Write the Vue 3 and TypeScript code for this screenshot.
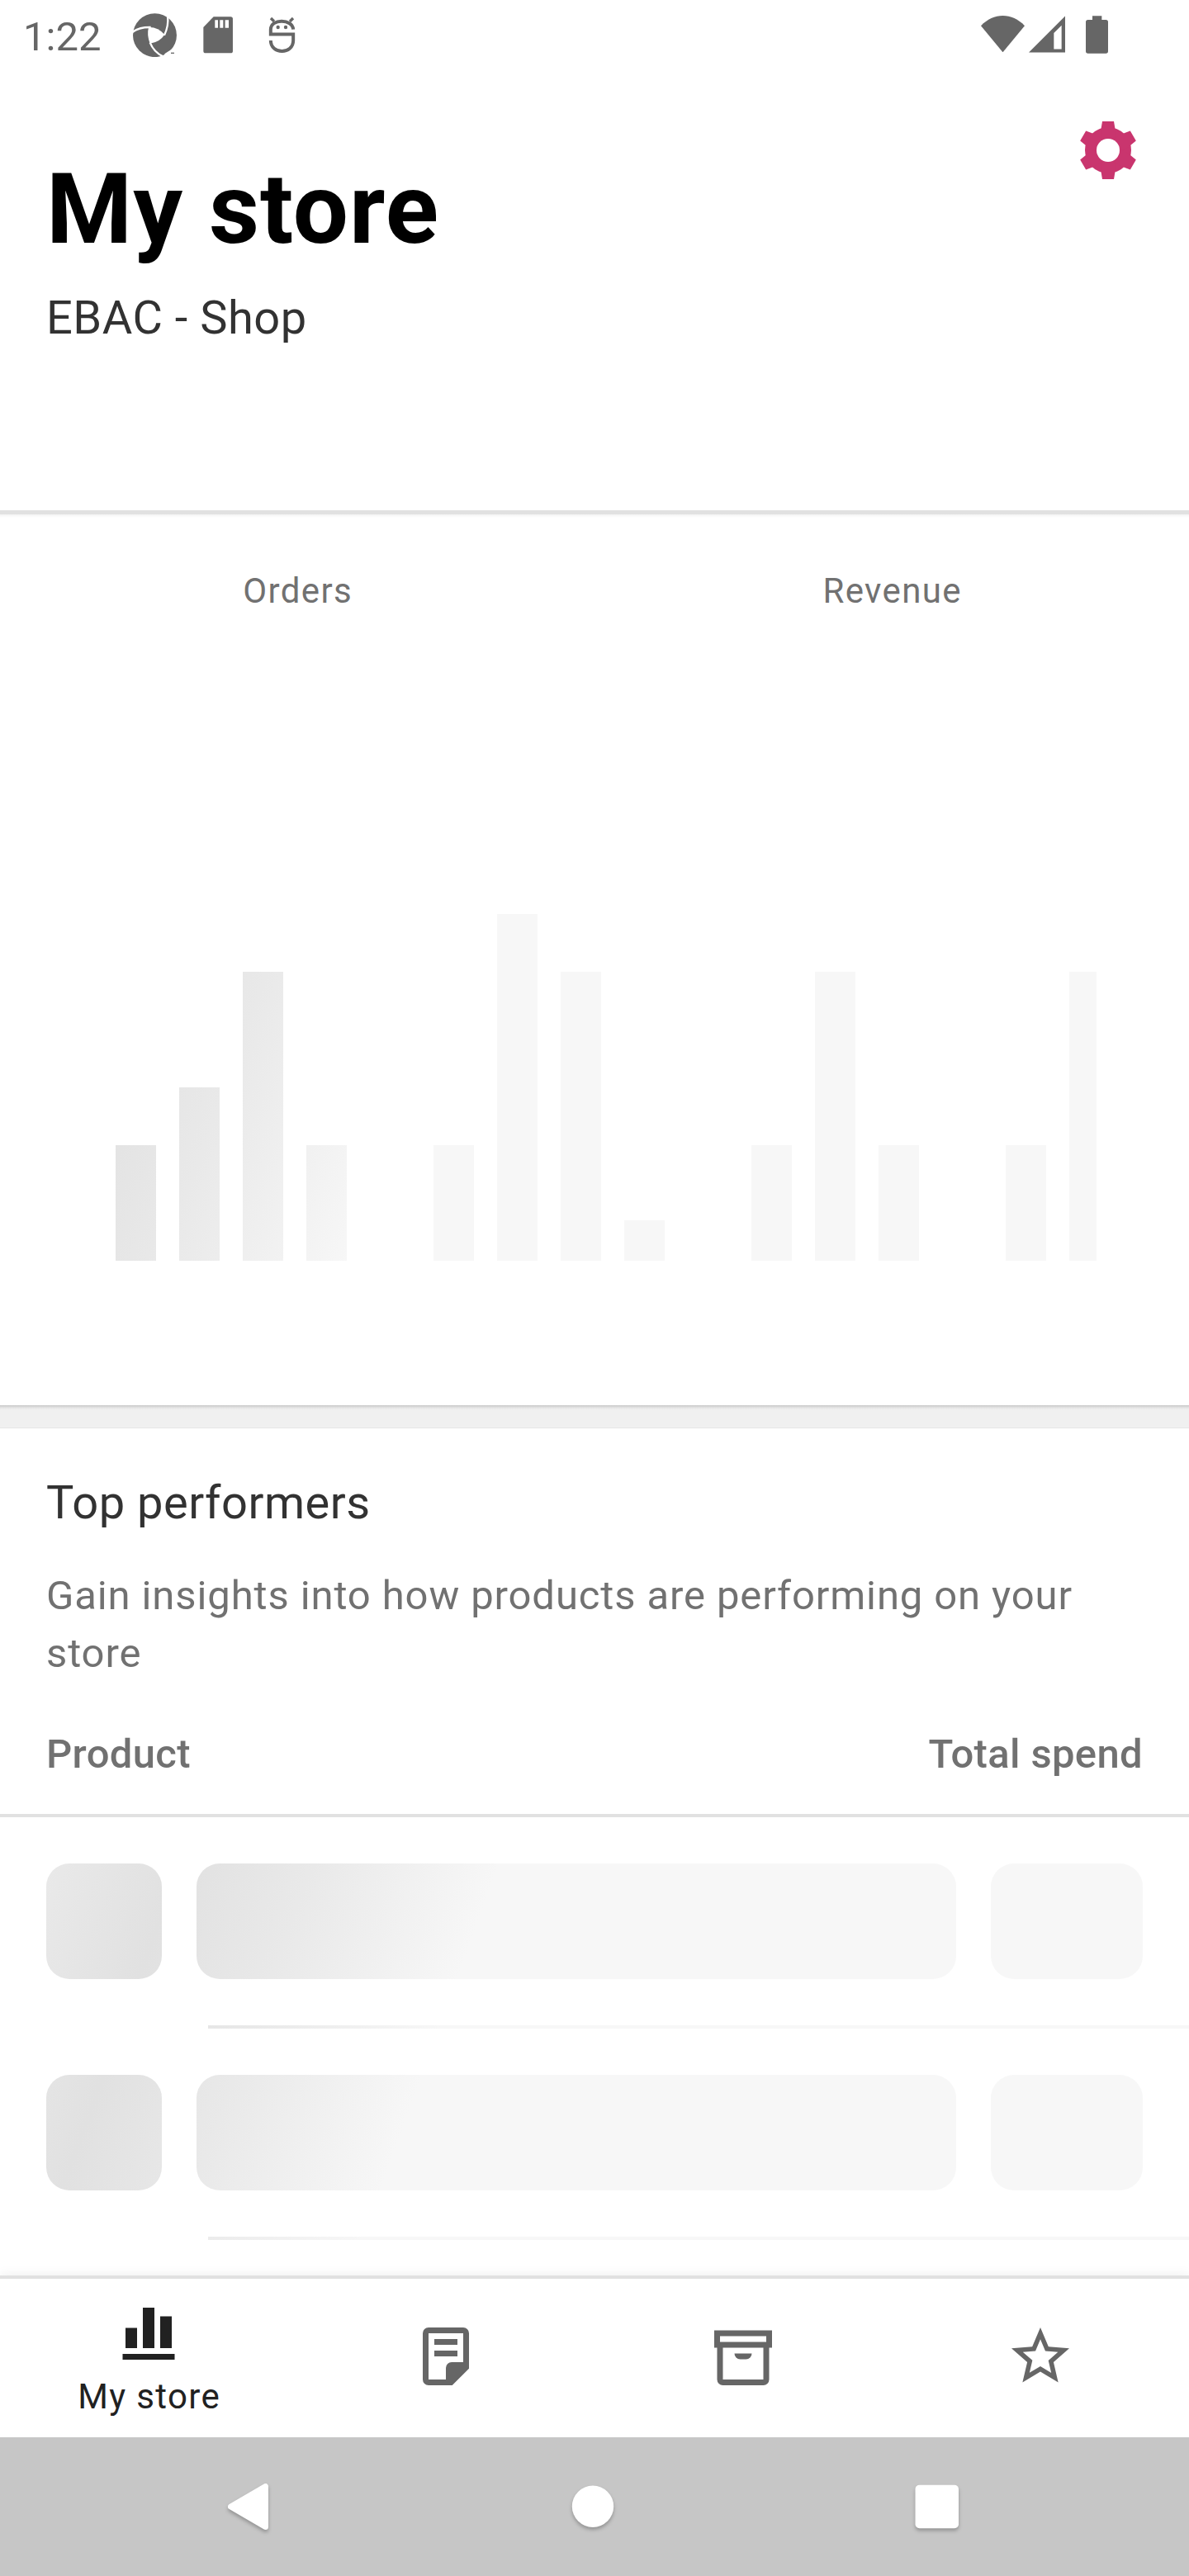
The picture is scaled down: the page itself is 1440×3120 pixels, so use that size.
<script setup lang="ts">
interface Bar {
  height: number
  width: number
}

const BAR_WIDTH = 49
const BAR_GAP = 28
const CHART_BOTTOM = 904
const CHART_LEFT = 140

/* Zero-height entries are the empty slots of the placeholder chart. */
const heights: number[] = [140, 210, 350, 140, 0, 140, 420, 350, 49, 0, 140, 350, 140, 0, 140, 350]
const bars: Bar[] = heights.map((height, i) => ({
  height,
  width: i === heights.length - 1 ? 33 : BAR_WIDTH,
}))

const TILT = (20 * Math.PI) / 180

/* Offset of the shimmer's darkest band from an element's top-left corner. */
function shimmer(x: number, y: number, origin: number): Record<string, string> {
  const band = origin - y * Math.tan(TILT)
  return { '--peak': `${((band - x) * Math.cos(TILT)).toFixed(1)}px` }
}

function barStyle(bar: Bar, index: number): Record<string, string> {
  const x = CHART_LEFT + index * (BAR_WIDTH + BAR_GAP)
  return {
    height: `${bar.height}px`,
    width: `${bar.width}px`,
    ...shimmer(x, CHART_BOTTOM - bar.height, 366),
  }
}

const ROW_HEIGHT = 256
const rows: number[] = [0, 1]
function cell(x: number, y: number, row: number): Record<string, string> {
  return shimmer(x, y + row * ROW_HEIGHT, 239)
}
</script>

<template>
  <div class="screen">
    <div class="status">
      <span class="clock">1:22</span>
      <svg class="s-aperture" viewBox="483 47 160 160">
        <circle cx="562.5" cy="127" r="79.5" fill="#666" />
        <path d="M540 98Q575 97 598 125Q580 153 545 157Q533 127 540 98Z" fill="#fff" />
        <g fill="none" stroke="#fff" stroke-width="7">
          <path d="M480 117Q504 97 548 98" />
          <path d="M609 56Q614 92 597 127" />
          <path d="M594 205Q560 190 545 154" />
        </g>
        <path d="M600 193L640 168V207H590Z" fill="#fff" />
        <path d="M621 190h12v4h-12z" fill="#666" />
      </svg>
      <svg class="s-card" viewBox="738 60 109 134">
        <path d="M776 60.500H838a8 8 0 0 1 8 8V185a8 8 0 0 1-8 8H747a8 8 0 0 1-8-8V99Z" fill="#666" />
        <path d="M781 73h11v28h-11zM799 73h12v28h-12zM818 73h13v28h-13z" fill="#fff" />
      </svg>
      <svg class="s-debug" viewBox="975 61 99 134">
        <path
          d="M1065.500 108C1063 69 983.500 67 983.500 108V125.500H1065.500V148C1065.500 200 983.500 200 983.500 148"
          fill="none" stroke="#666" stroke-width="12"
        />
        <path d="M984 67l12 12M1065 67l-12 12" stroke="#666" stroke-width="10" />
        <circle cx="1010" cy="100" r="6.500" fill="#666" />
        <circle cx="1038" cy="100" r="6.500" fill="#666" />
      </svg>
      <span class="spacer"></span>
      <svg class="s-wifi" viewBox="84 57 159 133">
        <path d="M163.500 190L84 94C130 45 197 45 243 94Z" fill="#666" />
      </svg>
      <svg class="s-signal" viewBox="257 57 132 134">
        <path d="M257 190.500L389 58.500V190.500ZM348 120V178.500H376V92Z" fill="#666" fill-rule="evenodd" />
      </svg>
      <svg class="s-battery" viewBox="465 57 81 138">
        <path d="M489 57.500h34V72h15a8 8 0 0 1 8 8V186a8 8 0 0 1-8 8H473a8 8 0 0 1-8-8V80a8 8 0 0 1 8-8h16Z" fill="#666" />
      </svg>
    </div>

    <header class="header">
      <div class="titles">
        <h1>My store</h1>
        <p>EBAC - Shop</p>
      </div>
      <svg class="gear" viewBox="0 0 24 24">
        <g fill="#c9356e">
          <circle cx="12" cy="12" r="8" />
          <path d="M10 2h4l.5 3v14l-.5 3h-4l-.5-3V5z" />
          <path d="M10 2h4l.5 3v14l-.5 3h-4l-.5-3V5z" transform="rotate(60 12 12)" />
          <path d="M10 2h4l.5 3v14l-.5 3h-4l-.5-3V5z" transform="rotate(120 12 12)" />
        </g>
        <circle cx="12" cy="12" r="4" fill="#fff" />
      </svg>
    </header>

    <section class="stats">
      <div class="tabs">
        <span>Orders</span>
        <span>Revenue</span>
      </div>
      <div class="chart">
        <div v-for="(bar, i) in bars" :key="i" class="bar bone" :style="barStyle(bar, i)"></div>
      </div>
    </section>
    <div class="band"></div>

    <section class="top">
      <h2>Top performers</h2>
      <p>Gain insights into how products are performing on your store</p>
      <div class="cols">
        <span>Product</span>
        <span>Total spend</span>
      </div>
    </section>

    <div class="list">
      <div v-for="row in rows" :key="row" class="item">
        <div class="cells">
          <div class="thumb bone" :style="cell(56, 56, row)"></div>
          <div class="name bone" :style="cell(238, 56, row)"></div>
          <div class="price bone" :style="cell(1200, 56, row)"></div>
        </div>
        <div class="rule bone" :style="cell(252, 252, row)"></div>
      </div>
    </div>

    <nav class="nav">
      <div class="tab active">
        <svg viewBox="0 0 24 24" fill="#212121">
          <path d="M4 11h4v7H4zM10 4h4v14h-4zM16 7h4v11h-4zM3 20h18v2H3z" />
        </svg>
        <span>My store</span>
      </div>
      <div class="tab">
        <svg viewBox="0 0 24 24" fill="#666" fill-rule="evenodd">
          <path d="M6 2h12a2 2 0 0 1 2 2v12.200L14.200 22H6a2 2 0 0 1-2-2V4a2 2 0 0 1 2-2zM6 4v16h6v-4a2 2 0 0 1 2-2h4V4zM8 6h8v2H8zM8 10h8v2H8z" />
        </svg>
      </div>
      <div class="tab">
        <svg viewBox="0 0 24 24" fill="#666" fill-rule="evenodd">
          <path d="M2 3h20v6H2zM4 5v2h16V5zM3 9h2v11h14V9h2v11a2 2 0 0 1-2 2H5a2 2 0 0 1-2-2zM9 11h6a2 2 0 0 1-2 2h-2a2 2 0 0 1-2-2z" />
        </svg>
      </div>
      <div class="tab">
        <svg viewBox="0 0 24 24" fill="#666">
          <path d="M22 9.240l-7.190-.62L12 2 9.190 8.630 2 9.240l5.460 4.730L5.820 21 12 17.270 18.180 21l-1.630-7.030L22 9.240zM12 15.400l-3.760 2.270 1-4.280-3.320-2.880 4.380-.38L12 6.100l1.710 4.040 4.380.38-3.320 2.880 1 4.280L12 15.400z" />
        </svg>
      </div>
    </nav>

    <div class="system">
      <svg viewBox="0 0 84 84">
        <path d="M21.500 42L63.500 17.500V66.500Z" fill="#fff" stroke="#fff" stroke-width="7" stroke-linejoin="round" />
      </svg>
      <svg viewBox="0 0 84 84"><circle cx="42" cy="41.700" r="25.200" fill="#fff" /></svg>
      <svg viewBox="0 0 84 84"><rect x="15.500" y="15.700" width="52.500" height="52.600" rx="5" fill="#fff" /></svg>
    </div>
  </div>
</template>

<style>
body {
  margin: 0;
  background: #fff;
}
</style>

<style scoped>
.screen {
  width: 1440px;
  height: 3120px;
  display: flex;
  flex-direction: column;
  overflow: hidden;
  background: #fff;
  font-family: Roboto, "Liberation Sans", sans-serif;
}
.screen > * {
  flex: none;
  box-sizing: border-box;
}
h1,
h2,
p {
  margin: 0;
}
svg {
  display: block;
  flex: none;
}

.status {
  height: 84px;
  display: flex;
  align-items: flex-start;
  padding: 0 98px 0 28px;
}
.clock {
  width: 133px;
  margin-top: 15px;
  font-size: 49px;
  line-height: 60px;
  color: #666;
}
.spacer {
  flex: 1;
}
.s-aperture {
  width: 53.3px;
  height: 53.3px;
  margin-top: 15.7px;
}
.s-card {
  width: 36.3px;
  height: 44.7px;
  margin: 20px 0 0 31.7px;
}
.s-debug {
  width: 33px;
  height: 44.7px;
  margin: 20.3px 0 0 42.7px;
}
.s-wifi {
  width: 53px;
  height: 44.3px;
  margin-top: 19px;
}
.s-signal {
  width: 44px;
  height: 44.7px;
  margin: 19px 0 0 4.7px;
}
.s-battery {
  width: 27px;
  height: 46px;
  margin: 19px 0 0 25.3px;
}

.header {
  height: 534px;
  display: flex;
  justify-content: space-between;
  padding: 0 56px;
}
.titles {
  padding-top: 100px;
}
h1 {
  font-size: 119px;
  line-height: 140px;
  font-weight: 700;
  letter-spacing: 0.009em;
  color: #000;
}
.titles p {
  margin-top: 28px;
  font-size: 56px;
  line-height: 66px;
  letter-spacing: 0.009em;
  color: #323232;
}
.gear {
  width: 84px;
  height: 84px;
  margin-top: 56px;
}

.stats {
  height: 1084px;
  display: flex;
  flex-direction: column;
  justify-content: space-between;
  border-top: 5px solid #e1e1e1;
  background: linear-gradient(#f3f3f3, #fff 4px);
}
.tabs {
  display: flex;
  padding-top: 68px;
}
.tabs span {
  flex: 1;
  padding-left: 1.4px;
  text-align: center;
  font-size: 42px;
  line-height: 50px;
  letter-spacing: 0.033em;
  color: #717171;
}
.chart {
  display: flex;
  align-items: flex-end;
  gap: 28px;
  padding: 0 0 175px 140px;
}
.bone {
  background: linear-gradient(
    110deg,
    #f7f7f7 calc(var(--peak) - 363px),
    #e9e9e9 calc(var(--peak) - 150px),
    #e1e1e1 var(--peak),
    #e9e9e9 calc(var(--peak) + 150px),
    #f7f7f7 calc(var(--peak) + 363px)
  );
}
.band {
  height: 28px;
  background: linear-gradient(#c6c6c6, #dcdcdc 2px, #ebebeb 4px, #f0f0f0 6px);
  border-bottom: 1px solid #e6e6e6;
}

.top {
  height: 471px;
  padding: 57px 56px 0;
  border-bottom: 4px solid #e1e1e1;
}
h2 {
  font-size: 56px;
  line-height: 66px;
  font-weight: 400;
  letter-spacing: 0.009em;
  color: #323232;
}
.top p {
  margin-top: 45px;
  font-size: 49px;
  line-height: 70px;
  letter-spacing: 0.018em;
  color: #717171;
}
.cols {
  display: flex;
  justify-content: space-between;
  margin-top: 58px;
  font-size: 49px;
  line-height: 58px;
  font-weight: 500;
  letter-spacing: 0.007em;
  color: #717171;
}

.list {
  height: 555px;
}
.cells {
  display: flex;
  gap: 42px;
  padding: 56px;
}
.cells .bone {
  height: 140px;
  border-radius: 28px;
}
.thumb {
  width: 140px;
}
.name {
  flex: 1;
}
.price {
  width: 184px;
}
.rule {
  height: 4px;
  margin-left: 252px;
}

.nav {
  position: relative;
  height: 196px;
  display: flex;
  border-top: 4px solid #e1e1e1;
  background: #fff;
  box-shadow: 0 -2px 12px rgba(0, 0, 0, 0.06);
}
.tab {
  flex: 1;
  display: flex;
  flex-direction: column;
  align-items: center;
  padding-top: 52px;
}
.tab svg {
  width: 84px;
  height: 84px;
}
.active {
  padding-top: 20.5px;
}
.active span {
  margin-top: 13.5px;
  padding-left: 1.4px;
  font-size: 42px;
  line-height: 50px;
  letter-spacing: 0.033em;
  color: #212121;
}

.system {
  position: relative;
  height: 168px;
  display: flex;
  align-items: center;
  justify-content: space-between;
  padding: 0 263px 0 258px;
  background: #c6c6c6;
}
.system svg {
  width: 84px;
  height: 84px;
  filter: drop-shadow(0 3px 2px rgba(0, 0, 0, 0.25));
}
</style>
